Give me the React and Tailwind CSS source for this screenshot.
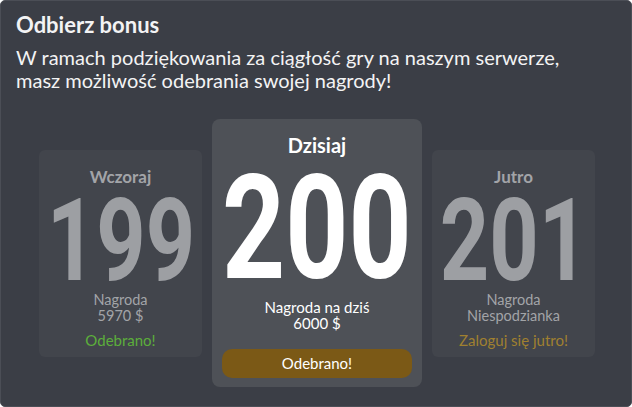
import React from "react";

const days = [
  {
    label: "Wczoraj",
    value: "199",
    lines: ["Nagroda", "5970 $"],
    status: "Odebrano!",
    statusClass: "text-[#5cae3b]",
  },
  {
    label: "Jutro",
    value: "201",
    lines: ["Nagroda", "Niespodzianka"],
    status: "Zaloguj się jutro!",
    statusClass: "text-[#a08030]",
  },
];

function SideCard({ day }) {
  return (
    <div className="w-[163px] h-[207px] rounded-md bg-[#42454c] flex flex-col items-center pt-[17px] text-[#a2a4a8]">
      <div className="text-[17px] leading-[20px] font-bold">{day.label}</div>
      <div className="mt-[9px] h-[90px] flex justify-center">
        <span className="inline-block scale-x-[0.75] font-['Roboto'] font-bold text-[115px] leading-[90px] text-[#9d9fa3]">
          {day.value}
        </span>
      </div>
      <div className="mt-[6px] text-[14.5px] leading-[16px] text-center">
        {day.lines.map((l) => (
          <div key={l}>{l}</div>
        ))}
      </div>
      <div className={"mt-[7px] text-[15px] leading-[18px] " + day.statusClass}>{day.status}</div>
    </div>
  );
}

function TodayCard() {
  return (
    <div className="w-[210px] h-[268px] rounded-lg bg-[#4e5157] flex flex-col items-center pt-[14px] px-[10px] text-white">
      <div className="text-[20px] leading-[24px] font-bold">Dzisiaj</div>
      <div className="mt-[16px] h-[110px] flex justify-center">
        <span className="inline-block scale-x-[0.76] font-['Roboto'] font-bold text-[145px] leading-[110px]">
          200
        </span>
      </div>
      <div className="mt-[16px] text-[15px] leading-[16px] text-center">
        <div>Nagroda na dziś</div>
        <div>6000 $</div>
      </div>
      <button className="mt-[18px] w-[190px] h-[29px] rounded-[10px] bg-[#7b5916] text-[15px] text-white">
        Odebrano!
      </button>
    </div>
  );
}

export default function App() {
  return (
    <div className="w-[632px] h-[407px] overflow-hidden rounded-[5px] border border-[#4b4e56] bg-[#3b3e46] font-['Lato',sans-serif] text-[#f3f3f4]">
      <div className="px-[15px] pt-[10px]">
        <h1 className="text-[22px] leading-[27px] font-bold">Odbierz bonus</h1>
        <p className="mt-[8px] text-[20px] leading-[23px]">
          W ramach podziękowania za ciągłość gry na naszym serwerze,
          <br />
          masz możliwość odebrania swojej nagrody!
        </p>
      </div>
      <div className="mt-[27px] flex items-center justify-center gap-[10px] pl-[2px]">
        <SideCard day={days[0]} />
        <TodayCard />
        <SideCard day={days[1]} />
      </div>
    </div>
  );
}
